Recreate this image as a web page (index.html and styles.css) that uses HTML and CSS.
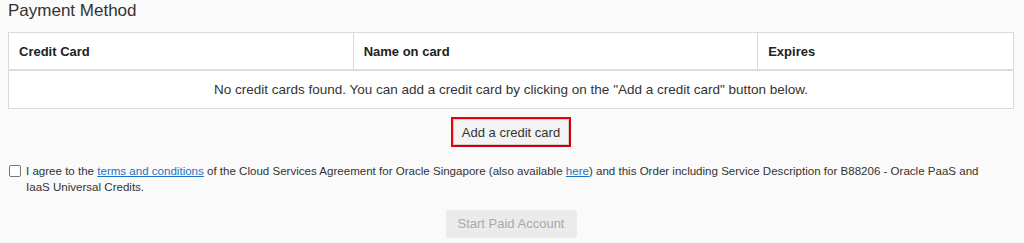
FILE: index.html
```html
<!DOCTYPE html>
<html>
<head>
<meta charset="utf-8">
<link rel="stylesheet" href="styles.css">
</head>
<body>
<div class="page">
  <h2 class="title">Payment Method</h2>
  <table class="cards">
    <colgroup>
      <col class="c1"><col class="c2"><col class="c3">
    </colgroup>
    <thead>
      <tr><th>Credit Card</th><th>Name on card</th><th>Expires</th></tr>
    </thead>
    <tbody>
      <tr><td colspan="3" class="empty">No credit cards found. You can add a credit card by clicking on the "Add a credit card" button below.</td></tr>
    </tbody>
  </table>
  <div class="add-row">
    <div class="highlight"><button class="btn">Add a credit card</button></div>
  </div>
  <div class="agree">
    <span class="box"></span>
    <p class="agree-text">I agree to the <a href="#">terms and conditions</a> of the Cloud Services Agreement for Oracle Singapore (also available <a href="#">here</a>) and this Order including Service Description for B88206 - Oracle PaaS and IaaS Universal Credits.</p>
  </div>
  <div class="start-row">
    <button class="btn-start" disabled>Start Paid Account</button>
  </div>
</div>
</body>
</html>
```
FILE: styles.css
```css
html, body {
  margin: 0;
  padding: 0;
  background: #fafafa;
}
body {
  font-family: "Liberation Sans", Arial, sans-serif;
  color: #333;
}
.page {
  padding: 0 10px 0 8px;
}
.title {
  margin: 0;
  font-size: 17px;
  font-weight: normal;
  line-height: 20px;
  color: #333;
  padding-top: 1px;
}
.cards {
  margin-top: 11px;
  width: 1006px;
  border-collapse: collapse;
  background: #fff;
  border: 1px solid #d9d9d9;
}
.c1 { width: 345px; }
.c2 { width: 405px; }
.c3 { width: 256px; }
.cards th {
  height: 36px;
  padding: 0 10px;
  text-align: left;
  font-size: 13px;
  font-weight: bold;
  color: #222;
  border-right: 1px solid #d9d9d9;
  border-bottom: 2px solid #dcdcdc;
}
.cards td.empty {
  height: 37px;
  padding: 0;
  text-align: center;
  font-size: 13.5px;
  color: #333;
}
.add-row {
  display: flex;
  justify-content: center;
  margin-top: 8px;
}
.highlight {
  border: 2px solid #e8000b;
}
.btn {
  display: block;
  font-family: inherit;
  font-size: 13px;
  color: #333;
  background: #f3f3f3;
  border: 1px solid #d0d0d0;
  box-shadow: 1px 1px 2px rgba(0,0,0,0.25);
  padding: 0 7px;
  height: 26px;
  width: 116px;
}
.agree {
  display: flex;
  align-items: flex-start;
  margin-top: 16px;
}
.box {
  flex: none;
  width: 10px;
  height: 10px;
  border: 1px solid #767676;
  border-radius: 2px;
  background: #fff;
  margin: 2px 5px 0 1px;
}
.agree-text {
  margin: 0;
  font-size: 11.55px;
  line-height: 16px;
  color: #333;
  max-width: 975px;
}
.agree-text a {
  color: #1a73c8;
  text-decoration: underline;
}
.start-row {
  display: flex;
  justify-content: center;
  margin-top: 15px;
}
.btn-start {
  font-family: inherit;
  font-size: 13px;
  color: #a9a9a9;
  background: #ebebeb;
  border: none;
  border-radius: 3px;
  width: 131px;
  height: 28px;
  padding: 0 0 2px;
}
```
